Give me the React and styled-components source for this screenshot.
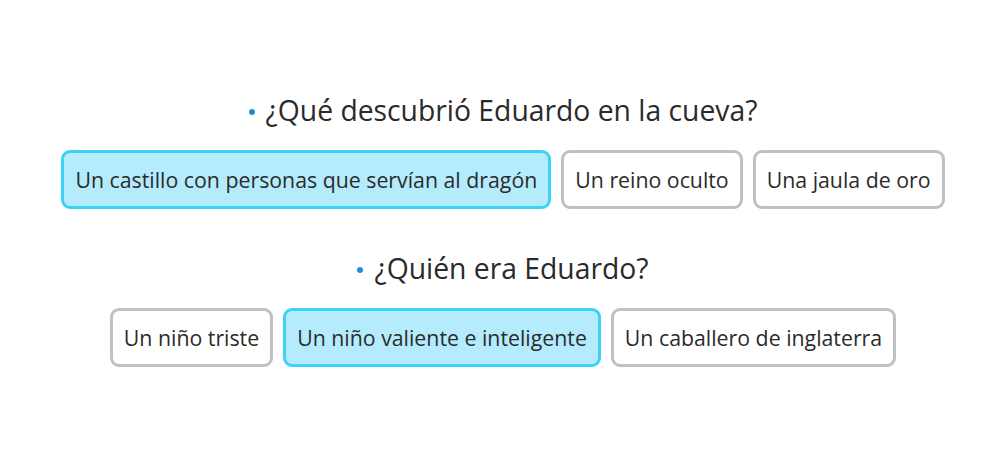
import React from "react";
import styled, { createGlobalStyle } from "styled-components";

const Global = createGlobalStyle`
  html, body { margin: 0; padding: 0; background: #fff; }
  body { font-family: "Open Sans", "Noto Sans", sans-serif; color: #2b2b2b; }
`;

const Page = styled.div`
  width: 1003px;
  height: 469px;
  display: flex;
  flex-direction: column;
  align-items: center;
  padding-top: 90px;
  padding-left: 3px;
  box-sizing: border-box;
`;

const Question = styled.div`
  display: flex;
  flex-direction: column;
  align-items: center;
  margin-bottom: 39px;
`;

const Title = styled.h2`
  margin: 0 0 20px;
  font-weight: 400;
  font-size: 28.3px;
  line-height: 40px;
  color: #2a2a2a;
  display: flex;
  align-items: center;
  gap: 11px;
`;

const Dot = styled.span`
  width: 6px;
  height: 6px;
  border-radius: 50%;
  background: #1a8fd8;
  margin-top: 4px;
`;

const Options = styled.div`
  display: flex;
  gap: 10px;
`;

const Option = styled.button`
  font-family: inherit;
  font-size: 21.3px;
  color: #2b2b2b;
  height: 59px;
  padding: 0 11px;
  border-radius: 9px;
  border: 3px solid ${(p) => (p.$selected ? "#3ad3f5" : "#c0c0c0")};
  background: ${(p) => (p.$selected ? "#b4ecfd" : "#fff")};
  box-sizing: border-box;
  cursor: pointer;
  white-space: nowrap;
`;

const data = [
  {
    q: "¿Qué descubrió Eduardo en la cueva?",
    opts: ["Un castillo con personas que servían al dragón", "Un reino oculto", "Una jaula de oro"],
    sel: 0,
  },
  {
    q: "¿Quién era Eduardo?",
    opts: ["Un niño triste", "Un niño valiente e inteligente", "Un caballero de inglaterra"],
    sel: 1,
  },
];

export default function App() {
  return (
    <>
      <Global />
      <Page>
        {data.map((d) => (
          <Question key={d.q}>
            <Title>
              <Dot />
              {d.q}
            </Title>
            <Options>
              {d.opts.map((o, i) => (
                <Option key={o} $selected={i === d.sel}>
                  {o}
                </Option>
              ))}
            </Options>
          </Question>
        ))}
      </Page>
    </>
  );
}
